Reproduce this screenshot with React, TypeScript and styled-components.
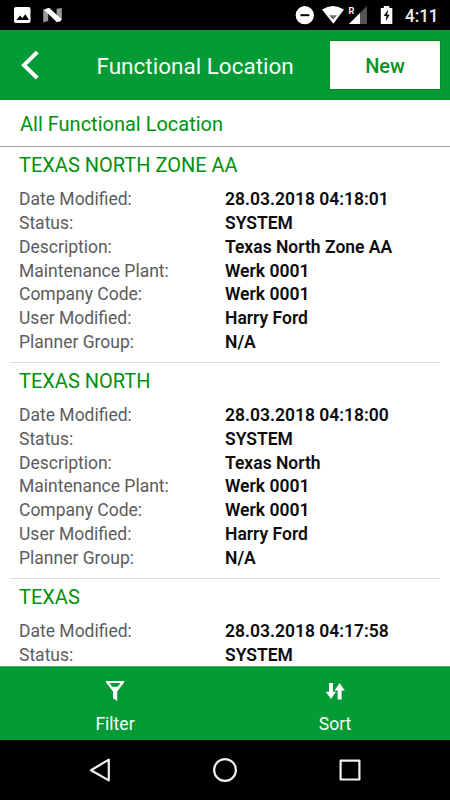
import React from "react";
import styled, { createGlobalStyle } from "styled-components";

const Global = createGlobalStyle`
  * { box-sizing: border-box; }
  body { margin: 0; background: #fff; font-family: Roboto, "Liberation Sans", sans-serif; }
  svg { display: block; flex: none; }
`;

const Screen = styled.div`
  width: 450px;
  height: 800px;
  display: flex;
  flex-direction: column;
  overflow: hidden;
`;

const StatusBar = styled.div`
  height: 30px;
  flex: none;
  background: #000;
`;

const Header = styled.header`
  height: 70px;
  flex: none;
  display: flex;
  align-items: center;
  padding: 0 10px 0 20px;
  background: #049a36;
  border-bottom: 1px solid #038f20;
`;

const Title = styled.h1`
  flex: 1;
  margin: 2px 0 0;
  padding-left: 55.5px;
  font-size: 22.5px;
  font-weight: 400;
  line-height: 30px;
  color: #f4fff6;
  white-space: nowrap;
`;

const BackButton = styled.button`
  width: 21px;
  height: 30px;
  padding: 0;
  border: 0;
  background: none;
`;

const NewButton = styled.button`
  width: 110px;
  height: 48px;
  margin-top: 1px;
  padding: 2px 0 0;
  border: 0;
  background: #fff;
  box-shadow: 0 0 0 1px #048f20;
  color: #04931c;
  font: 500 20px Roboto, sans-serif;
`;

const ListHeading = styled.div`
  height: 47px;
  flex: none;
  padding: 1px 20px 0;
  border-bottom: 1px solid #a2a2a2;
  font-size: 20px;
  line-height: 46px;
  color: #00900f;
`;

const List = styled.main`
  flex: 1;
  min-height: 0;
  overflow: hidden;
  padding: 0 10px;
`;

const Card = styled.section`
  height: 215.8px;
  padding: 6px 9px 0;
  border-bottom: 1.5px solid #dcdcdc;
`;

const CardTitle = styled.h2`
  margin: 0 0 11.4px;
  font-size: 20px;
  font-weight: 400;
  line-height: 24px;
  color: #00900f;
`;

const Field = styled.div`
  display: grid;
  grid-template-columns: 206px 1fr;
  height: 23.75px;
  font-size: 17.5px;
  line-height: 23.75px;
  white-space: nowrap;
`;

const Label = styled.span`
  color: #5c5c5c;
`;

const Value = styled.span`
  color: #0c0c0c;
  font-weight: 600;
`;

const Toolbar = styled.nav`
  height: 74px;
  flex: none;
  display: grid;
  grid-template-columns: 1fr 1fr;
  padding: 0 5px;
  background: #049a36;
  border-top: 1px solid #5fae6c;
`;

const ToolButton = styled.button`
  display: flex;
  flex-direction: column;
  align-items: center;
  gap: 10px;
  padding: 13px 0 0;
  border: 0;
  background: none;
  color: #f4fff6;
  font: 400 17.5px/24px Roboto, sans-serif;
`;

const NavBar = styled.footer`
  height: 60px;
  flex: none;
  background: #000;
`;

const StatusIcons = () => (
  <svg width="450" height="30" viewBox="0 0 450 30">
    <rect x="14" y="7" width="16.5" height="16" rx="2" fill="#fff" />
    <path d="M16.5 20l3.5-4.6 2.3 2.7 3.1-3.9 3.6 5.8z" fill="#000" />
    <path d="M43.2 10l5-2v13l-5 1.2zM56.6 8.8l5.2-.8v12l-5.2 1.8z" fill="#999" />
    <path d="M44 9.8l5.2-2 12 11.2-.5 2.3-4 .7z" fill="#fff" />
    <circle cx="304.8" cy="15.2" r="9.1" fill="#fff" />
    <path d="M300.5 15.2h8.8" stroke="#000" strokeWidth="2" />
    <path d="M322 9.4Q333 2.4 344 9.4L333.3 23.8z" fill="#fff" />
    <path d="M329.2 15.2h7.8l-3.8 4.6z" fill="#707070" />
    <path d="M349 24l18-18v18z" fill="#555" />
    <path d="M349 24l11-11v11z" fill="#fff" />
    <path d="M383.8 6h5.5v2h3v16h-11.5V8h3z" fill="#fff" />
    <path d="M388 9.8l-4.4 6.2h2.8l-.7 5.2 4-6.5h-2.5z" fill="#000" />
    <text x="348.5" y="13.8" fontSize="9" fontWeight="600" fill="#fff">R</text>
    <text x="405" y="22" fontSize="18.5" fontWeight="500" fill="#eee" textLength="33.5" lengthAdjust="spacingAndGlyphs">4:11</text>
  </svg>
);

const BackIcon = () => (
  <svg width="21" height="30" viewBox="0 0 21 30">
    <path d="M17.2 2.2L4 15.2l13.2 12.8" fill="none" stroke="#fff" strokeWidth="4" />
  </svg>
);

const FilterIcon = () => (
  <svg width="20" height="22" viewBox="0 0 20 22">
    <path d="M1 1h18v1.6L12.2 11.6v9.4L8 18.2v-6.6L1 2.6zM4.4 3l2.9 3.8h5.4L15.6 3z" fill="#fff" fillRule="evenodd" />
  </svg>
);

const SortIcon = () => (
  <svg width="20" height="22" viewBox="0 0 20 22">
    <path d="M4 3h4v8.8h3L6 19 .7 11.8H4z" fill="#fff" />
    <path d="M12.6 19.5h4v-9h3.2L14.6 3l-5 7.5h3z" fill="#fff" />
  </svg>
);

const NavIcons = () => (
  <svg width="450" height="60" viewBox="0 0 450 60" fill="none" stroke="#f0f0f0" strokeWidth="2.2" strokeLinejoin="round">
    <path d="M91 30.2L108.8 19.6v20.8z" />
    <circle cx="225" cy="30" r="10.9" />
    <rect x="340.6" y="20.7" width="18.8" height="18.8" />
  </svg>
);

const fullCard = (title: string, date: string, description: string) => ({
  title,
  fields: [
    ["Date Modified:", date],
    ["Status:", "SYSTEM"],
    ["Description:", description],
    ["Maintenance Plant:", "Werk 0001"],
    ["Company Code:", "Werk 0001"],
    ["User Modified:", "Harry Ford"],
    ["Planner Group:", "N/A"],
  ],
});

const locations = [
  fullCard("TEXAS NORTH ZONE AA", "28.03.2018 04:18:01", "Texas North Zone AA"),
  fullCard("TEXAS NORTH", "28.03.2018 04:18:00", "Texas North"),
  {
    title: "TEXAS",
    fields: [
      ["Date Modified:", "28.03.2018 04:17:58"],
      ["Status:", "SYSTEM"],
    ],
  },
];

export default function App() {
  return (
    <Screen>
      <Global />
      <StatusBar><StatusIcons /></StatusBar>
      <Header>
        <BackButton aria-label="Back"><BackIcon /></BackButton>
        <Title>Functional Location</Title>
        <NewButton>New</NewButton>
      </Header>
      <ListHeading>All Functional Location</ListHeading>
      <List>
        {locations.map(({ title, fields }) => (
          <Card key={title}>
            <CardTitle>{title}</CardTitle>
            {fields.map(([label, value]) => (
              <Field key={label}>
                <Label>{label}</Label>
                <Value>{value}</Value>
              </Field>
            ))}
          </Card>
        ))}
      </List>
      <Toolbar>
        <ToolButton><FilterIcon />Filter</ToolButton>
        <ToolButton><SortIcon />Sort</ToolButton>
      </Toolbar>
      <NavBar><NavIcons /></NavBar>
    </Screen>
  );
}
